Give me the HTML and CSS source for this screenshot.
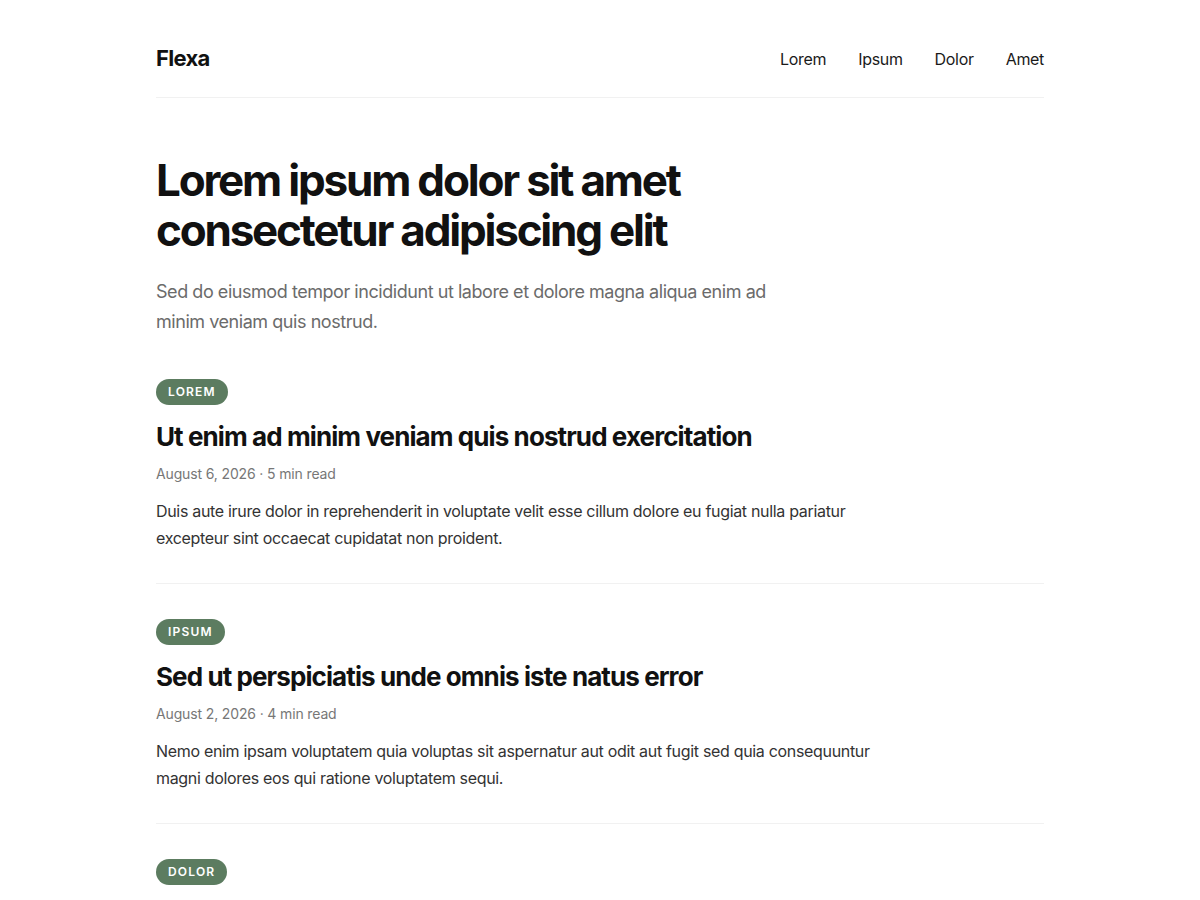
FILE: index.html
```html
<!DOCTYPE html>
<html lang="en">
<head>
<meta charset="UTF-8">
<meta name="viewport" content="width=device-width, initial-scale=1.0">
<title>Flexa</title>
<link rel="stylesheet" href="styles.css">
</head>
<body>

<div class="container">
  <header class="site-header">
    <a class="logo" href="#">Flexa</a>
    <nav class="nav">
      <a href="#">Lorem</a>
      <a href="#">Ipsum</a>
      <a href="#">Dolor</a>
      <a href="#">Amet</a>
    </nav>
  </header>

  <section class="hero">
    <h1>Lorem ipsum dolor sit amet consectetur adipiscing elit</h1>
    <p>Sed do eiusmod tempor incididunt ut labore et dolore magna aliqua enim ad minim veniam quis nostrud.</p>
  </section>

  <article class="post">
    <span class="tag">Lorem</span>
    <h2>Ut enim ad minim veniam quis nostrud exercitation</h2>
    <div class="meta">August 6, 2026 · 5 min read</div>
    <p>Duis aute irure dolor in reprehenderit in voluptate velit esse cillum dolore eu fugiat nulla pariatur excepteur sint occaecat cupidatat non proident.</p>
  </article>

  <article class="post">
    <span class="tag">Ipsum</span>
    <h2>Sed ut perspiciatis unde omnis iste natus error</h2>
    <div class="meta">August 2, 2026 · 4 min read</div>
    <p>Nemo enim ipsam voluptatem quia voluptas sit aspernatur aut odit aut fugit sed quia consequuntur magni dolores eos qui ratione voluptatem sequi.</p>
  </article>

  <article class="post">
    <span class="tag">Dolor</span>
    <h2>Neque porro quisquam est qui dolorem ipsum quia</h2>
    <div class="meta">July 28, 2026 · 6 min read</div>
    <p>Quis autem vel eum iure reprehenderit qui in ea voluptate velit esse quam nihil molestiae consequatur vel illum.</p>
  </article>
</div>

</body>
</html>
```

FILE: styles.css
```css
body {
  font-family: Inter, "Noto Sans", Arial, sans-serif;
  background-color: #fff;
  color: #111;
  margin: 0;
  padding: 0;
}
a {
  color: inherit;
  text-decoration: none;
}
.container {
  max-width: 888px;
  margin: 0 auto;
}
.site-header {
  display: flex;
  justify-content: space-between;
  align-items: center;
  padding: 42px 0 22px;
  border-bottom: 1px solid #f1f1f1;
}
.logo {
  font-size: 22px;
  font-weight: 700;
  line-height: 33px;
  letter-spacing: -0.03em;
}
.nav {
  display: flex;
  gap: 32px;
}
.nav a {
  font-size: 16px;
  color: #1a1a1a;
  letter-spacing: -0.02em;
}
.hero {
  padding: 57px 0 7px;
}
.hero h1 {
  font-size: 44px;
  line-height: 50px;
  font-weight: 700;
  letter-spacing: -0.05em;
  margin: 0;
  max-width: 600px;
}
.hero p {
  font-size: 18px;
  line-height: 30px;
  color: #6b6b6b;
  margin: 22px 0 0;
  max-width: 620px;
  letter-spacing: -0.025em;
}
.post {
  padding: 35px 0 31px;
  border-bottom: 1px solid #f1f1f1;
}
.tag {
  display: inline-block;
  background-color: #5c7c60;
  color: #fff;
  font-size: 12px;
  font-weight: 600;
  letter-spacing: 0.1em;
  text-transform: uppercase;
  line-height: 26px;
  padding: 0 12px;
  border-radius: 13px;
}
.post h2 {
  font-size: 26px;
  line-height: 34px;
  font-weight: 700;
  letter-spacing: -0.035em;
  margin: 15px 0 9px;
}
.meta {
  font-size: 14px;
  line-height: 21px;
  color: #777;
  letter-spacing: -0.01em;
}
.post p {
  font-size: 16px;
  line-height: 27px;
  color: #333;
  margin: 14px 0 0;
  max-width: 720px;
  letter-spacing: -0.02em;
}
```
